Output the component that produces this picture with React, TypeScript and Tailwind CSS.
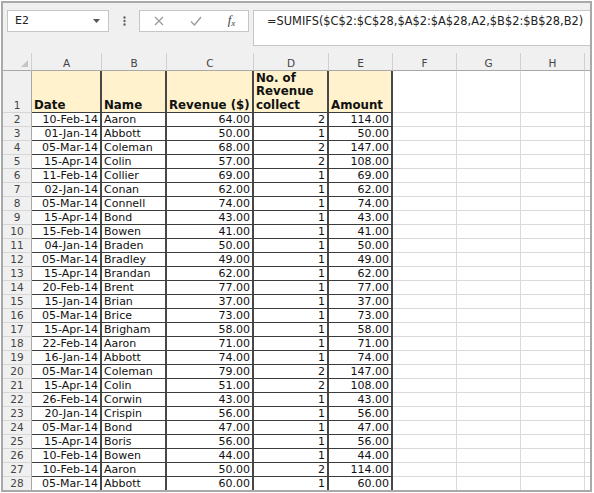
import type { ReactNode } from 'react';

type Row = [string, string, string, string, string];

const rows: Row[] = [
  ['10-Feb-14', 'Aaron', '64.00', '2', '114.00'],
  ['01-Jan-14', 'Abbott', '50.00', '1', '50.00'],
  ['05-Mar-14', 'Coleman', '68.00', '2', '147.00'],
  ['15-Apr-14', 'Colin', '57.00', '2', '108.00'],
  ['11-Feb-14', 'Collier', '69.00', '1', '69.00'],
  ['02-Jan-14', 'Conan', '62.00', '1', '62.00'],
  ['05-Mar-14', 'Connell', '74.00', '1', '74.00'],
  ['15-Apr-14', 'Bond', '43.00', '1', '43.00'],
  ['15-Feb-14', 'Bowen', '41.00', '1', '41.00'],
  ['04-Jan-14', 'Braden', '50.00', '1', '50.00'],
  ['05-Mar-14', 'Bradley', '49.00', '1', '49.00'],
  ['15-Apr-14', 'Brandan', '62.00', '1', '62.00'],
  ['20-Feb-14', 'Brent', '77.00', '1', '77.00'],
  ['15-Jan-14', 'Brian', '37.00', '1', '37.00'],
  ['05-Mar-14', 'Brice', '73.00', '1', '73.00'],
  ['15-Apr-14', 'Brigham', '58.00', '1', '58.00'],
  ['22-Feb-14', 'Aaron', '71.00', '1', '71.00'],
  ['16-Jan-14', 'Abbott', '74.00', '1', '74.00'],
  ['05-Mar-14', 'Coleman', '79.00', '2', '147.00'],
  ['15-Apr-14', 'Colin', '51.00', '2', '108.00'],
  ['26-Feb-14', 'Corwin', '43.00', '1', '43.00'],
  ['20-Jan-14', 'Crispin', '56.00', '1', '56.00'],
  ['05-Mar-14', 'Bond', '47.00', '1', '47.00'],
  ['15-Apr-14', 'Boris', '56.00', '1', '56.00'],
  ['10-Feb-14', 'Bowen', '44.00', '1', '44.00'],
  ['10-Feb-14', 'Aaron', '50.00', '2', '114.00'],
  ['05-Mar-14', 'Abbott', '60.00', '1', '60.00'],
];

const letters = ['A', 'B', 'C', 'D', 'E', 'F', 'G', 'H'];

const gridCols =
  'grid grid-cols-[29px_70px_65px_87px_75px_64px_64px_64px_64px_1fr]';

// F, G, H and the filler column
function Blanks({ h }: { h: string }) {
  return (
    <>
      <div className={`${h} border-r border-b border-[#dadada]`} />
      <div className={`${h} border-r border-b border-[#dadada]`} />
      <div className={`${h} border-r border-b border-[#dadada]`} />
      <div className={`${h} border-b border-[#dadada]`} />
    </>
  );
}

function RowHead({ n, h }: { n: number; h: string }) {
  return (
    <div
      className={`${h} flex items-end justify-center bg-[#f0f0f0] border-r border-r-[#a8a8a8] border-b border-b-[#d6d6d6] text-[#444] text-[10.5px] leading-[13px]`}
    >
      {n}
    </div>
  );
}

function Cell({
  children,
  right,
}: {
  children: ReactNode;
  right?: boolean;
}) {
  return (
    <div
      className={`h-[14px] border-r-2 border-r-[#474747] border-b border-b-[#3c3c3c] whitespace-nowrap overflow-hidden text-[11px] leading-[13px] text-[#111] ${
        right ? 'text-right pr-[2px]' : 'pl-[2px]'
      }`}
    >
      {children}
    </div>
  );
}

function HeadCell({ children }: { children: ReactNode }) {
  return (
    <div className="h-[42px] flex items-end bg-[#fff2cc] border-r-2 border-r-[#474747] border-b border-b-[#3c3c3c] pl-[2px] font-bold text-[11.8px] leading-[13.5px] text-[#111] whitespace-nowrap overflow-hidden">
      <div>{children}</div>
    </div>
  );
}

export default function App() {
  return (
    <div className="w-[594px] h-[493px] bg-white p-px font-['DejaVu_Sans',Verdana,sans-serif] text-[10px] leading-[14px] text-black">
      <div className="w-[591px] h-[491px] border-2 border-[#a9a9a9] bg-[#f0f0f0] overflow-hidden flex flex-col">
        {/* toolbar */}
        <div className="h-[50px] shrink-0 flex items-start pt-[7px] pl-[4px]">
          <div className="w-[102px] h-[22px] bg-white border border-[#c6c6c6] flex items-center pl-[7px] pr-[8px] text-[11px] text-[#222]">
            <span className="flex-1">E2</span>
            <svg width="7" height="4" viewBox="0 0 7 4">
              <path d="M0 0h7L3.5 4z" fill="#555" />
            </svg>
          </div>
          <div className="w-[30px] h-[22px] flex items-center justify-center">
            <svg width="3" height="10" viewBox="0 0 3 10">
              <circle cx="1.5" cy="1.5" r="1.2" fill="#666" />
              <circle cx="1.5" cy="5" r="1.2" fill="#666" />
              <circle cx="1.5" cy="8.5" r="1.2" fill="#666" />
            </svg>
          </div>
          <div className="w-[110px] h-[22px] bg-white border border-[#c6c6c6] flex items-center">
            <div className="w-[37px] flex justify-center">
              <svg width="10" height="10" viewBox="0 0 10 10">
                <path
                  d="M1 1l8 8M9 1l-8 8"
                  stroke="#9c9c9c"
                  strokeWidth="1.3"
                />
              </svg>
            </div>
            <div className="w-[38px] flex justify-center">
              <svg width="12" height="10" viewBox="0 0 12 10">
                <path
                  d="M1 5.5l3.5 3.5L11 1"
                  stroke="#9c9c9c"
                  strokeWidth="1.4"
                  fill="none"
                />
              </svg>
            </div>
            <div className="w-[33px] flex justify-center font-['Liberation_Serif',serif] italic text-[13px] text-[#444]">
              f<span className="text-[9px] mt-[3px]">x</span>
            </div>
          </div>
          <div className="ml-[4px] flex-1 h-[36px] bg-white border border-[#c6c6c6] border-r-0 pl-[13px] pt-[3px] text-[11.4px] text-[#222] whitespace-nowrap">
            =SUMIFS($C$2:$C$28,$A$2:$A$28,A2,$B$2:$B$28,B2)
          </div>
        </div>

        {/* sheet */}
        <div className={`${gridCols} bg-white`}>
          {/* column headers */}
          <div className="h-[18px] bg-[#f0f0f0] border-r border-r-[#d0d0d0] border-b border-b-[#a8a8a8] flex items-end justify-end pr-[3px] pb-[3px]">
            <svg width="7" height="7" viewBox="0 0 7 7">
              <path d="M7 0v7H0z" fill="#c4c4c4" />
            </svg>
          </div>
          {letters.map((l) => (
            <div
              key={l}
              className="h-[18px] bg-[#f0f0f0] border-r border-r-[#d0d0d0] border-b border-b-[#a8a8a8] flex items-center justify-center text-[#444] text-[10.5px] pt-[2px]"
            >
              {l}
            </div>
          ))}
          <div className="h-[18px] bg-[#f0f0f0] border-b border-b-[#a8a8a8]" />

          {/* row 1 */}
          <RowHead n={1} h="h-[42px]" />
          <HeadCell>Date</HeadCell>
          <HeadCell>Name</HeadCell>
          <HeadCell>Revenue ($)</HeadCell>
          <HeadCell>
            No. of
            <br />
            Revenue
            <br />
            collect
          </HeadCell>
          <HeadCell>Amount</HeadCell>
          <Blanks h="h-[42px]" />

          {rows.map((r, i) => (
            <div key={i} className="contents">
              <RowHead n={i + 2} h="h-[14px]" />
              <Cell right>{r[0]}</Cell>
              <Cell>{r[1]}</Cell>
              <Cell right>{r[2]}</Cell>
              <Cell right>{r[3]}</Cell>
              <Cell right>{r[4]}</Cell>
              <Blanks h="h-[14px]" />
            </div>
          ))}
        </div>
      </div>
    </div>
  );
}
